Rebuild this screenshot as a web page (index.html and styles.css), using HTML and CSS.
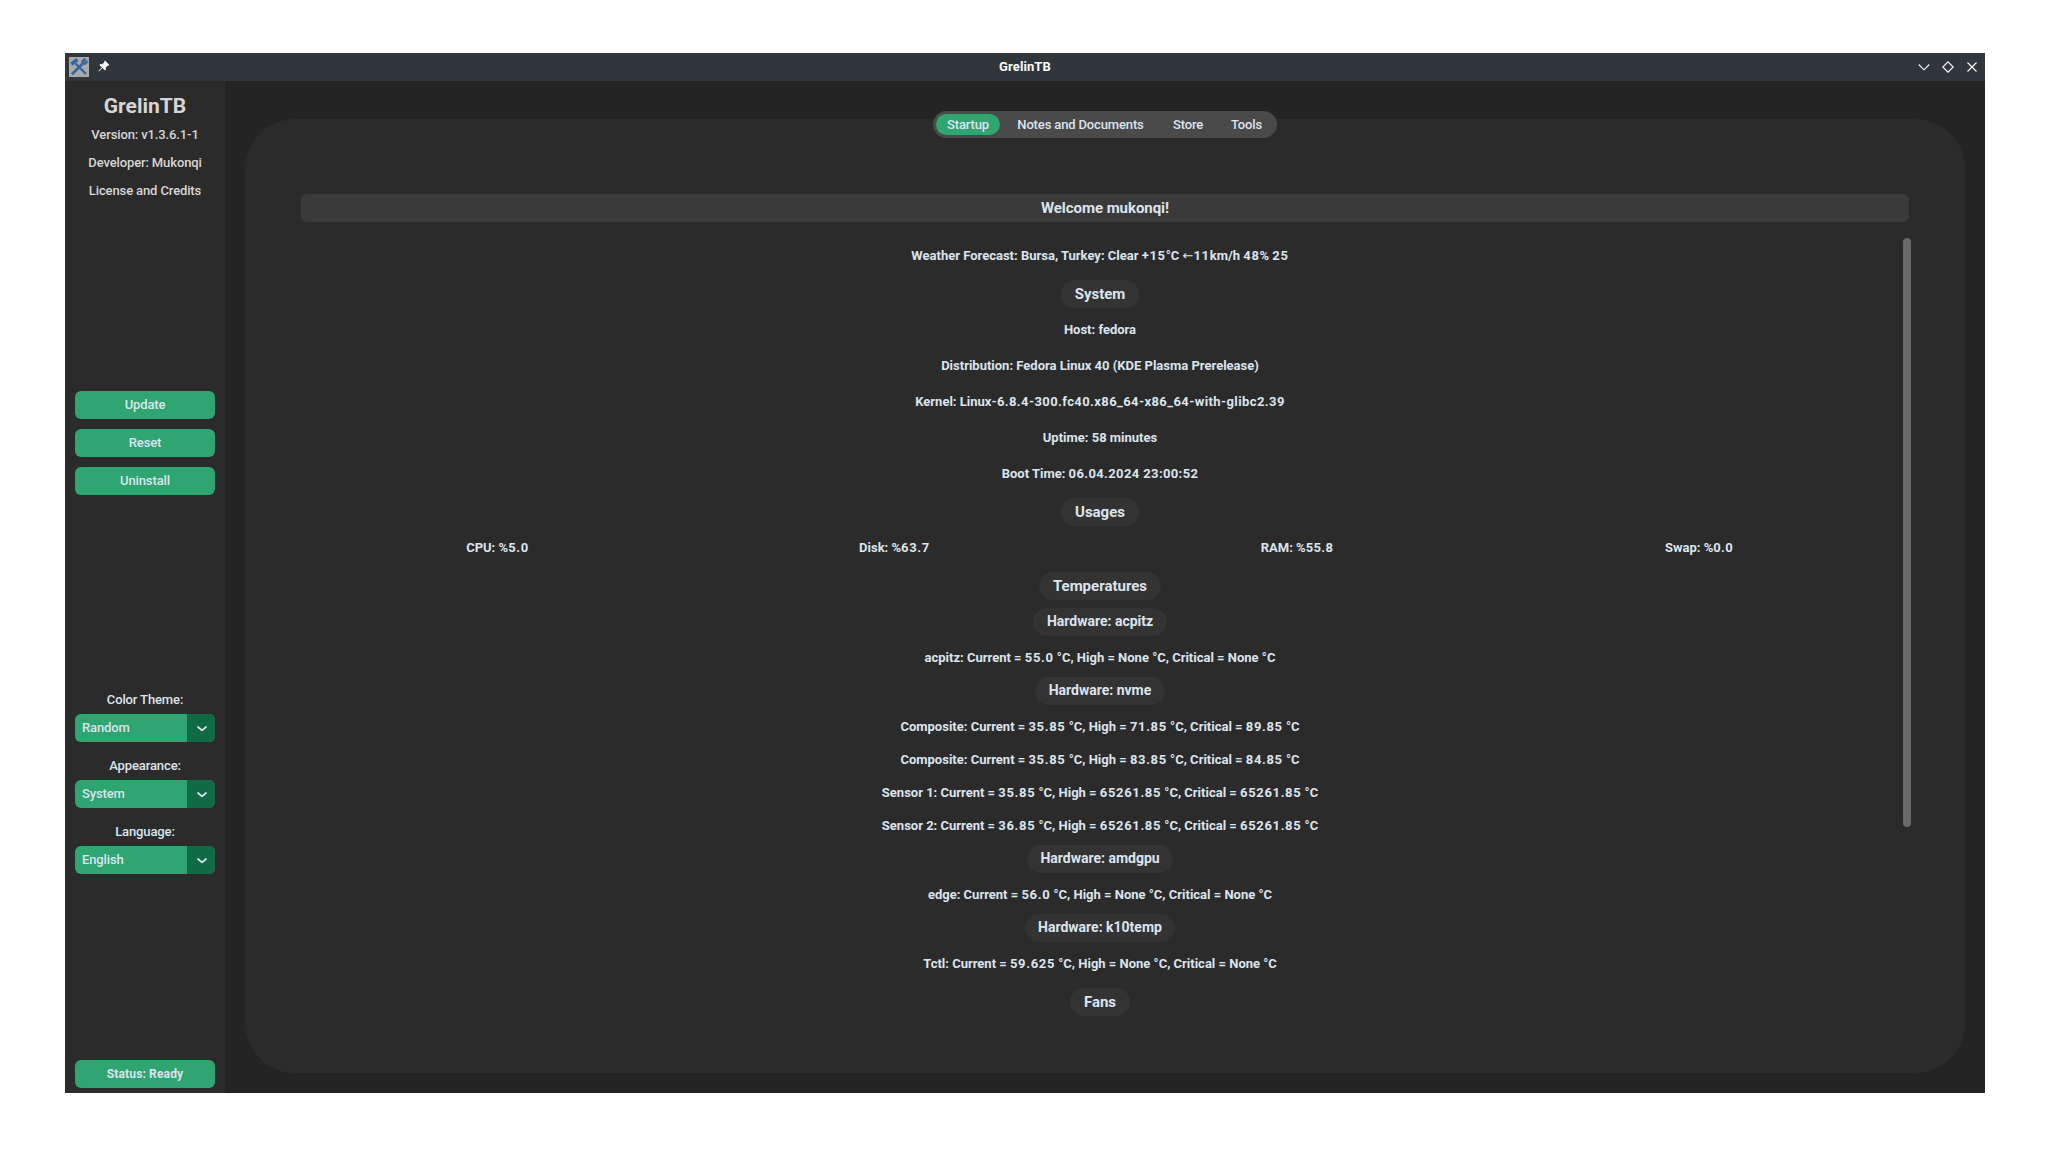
FILE: index.html
```html
<!DOCTYPE html>
<html lang="en">
<head>
<meta charset="utf-8">
<title>GrelinTB</title>
<link rel="stylesheet" href="styles.css">
</head>
<body>
<div class="window">
  <header class="titlebar">
    <div class="title-left">
      <svg class="app-icon" width="20" height="20" viewBox="0 0 20 20">
        <rect width="20" height="20" fill="#a9a9a9"/>
        <g fill="none" stroke="#3568a2">
          <path d="M6.5 6.5 17 17" stroke-width="2.4"/>
          <path d="M13.3 7 3 17.2" stroke-width="2.8"/>
          <path d="M2.3 7.2 8.4 2.6" stroke-width="3.8"/>
          <path d="M16.4 1.6 13.7 4.2V6.5H16L18.4 4" stroke-width="2.6"/>
        </g>
      </svg>
      <svg class="pin" width="12" height="12" viewBox="0 0 12 12" fill="#fcfcfc">
        <path d="M7 .6 11.4 5l-1 .8-.7-.2-2 2.200.2 1.700-1 1L4.500 8.100.9 11.600l-.5-.5L3.900 7.500 1.500 5.100l1-1 1.700.2L6.400 2.300l-.2-.7z"/>
      </svg>
    </div>
    <div class="title">GrelinTB</div>
    <div class="title-right">
      <svg width="12" height="12" viewBox="0 0 12 12"><path d="M.7 3.500 6 8.800 11.300 3.500"/></svg>
      <svg width="12" height="12" viewBox="0 0 12 12"><path d="M6 .8 11.200 6 6 11.200.8 6z"/></svg>
      <svg width="12" height="12" viewBox="0 0 12 12"><path d="M1.500 1.500 10.500 10.500M10.500 1.500 1.500 10.500"/></svg>
    </div>
  </header>
  <div class="body">
    <aside class="sidebar">
      <div class="about">
        <h1>GrelinTB</h1>
        <p>Version: v1.3.6.1-1</p>
        <p>Developer: Mukonqi</p>
        <p>License and Credits</p>
      </div>
      <div class="actions">
        <button>Update</button>
        <button>Reset</button>
        <button>Uninstall</button>
      </div>
      <div class="options">
        <label>Color Theme:</label>
        <div class="select"><span>Random</span><i><svg width="10" height="6" viewBox="0 0 10 6"><path d="M1 1 5 4.300 9 1"/></svg></i></div>
        <label>Appearance:</label>
        <div class="select"><span>System</span><i><svg width="10" height="6" viewBox="0 0 10 6"><path d="M1 1 5 4.300 9 1"/></svg></i></div>
        <label>Language:</label>
        <div class="select"><span>English</span><i><svg width="10" height="6" viewBox="0 0 10 6"><path d="M1 1 5 4.300 9 1"/></svg></i></div>
      </div>
      <div class="status">Status: Ready</div>
    </aside>
    <main class="main">
      <nav class="tabs">
        <a class="tab active">Startup</a>
        <a class="tab notes">Notes and Documents</a>
        <a class="tab store">Store</a>
        <a class="tab tools">Tools</a>
      </nav>
      <section class="panel">
        <div class="welcome">Welcome mukonqi!</div>
        <div class="scroll">
          <div class="content">
            <p>Weather Forecast: Bursa, Turkey: Clear <span class="num">+15</span>°C <span class="arrow">←</span><span class="num">11</span>km/h <span class="num">48</span>% <span class="num">25</span></p>
            <h2>System</h2>
            <p>Host: fedora</p>
            <p>Distribution: Fedora Linux 40 (KDE Plasma Prerelease)</p>
            <p>Kernel: Linux<span class="release">-6.8.4-300.fc40.x86_64-x86_64-with-glibc2.39</span></p>
            <p>Uptime: 58 minutes</p>
            <p>Boot Time: <span class="date">06.04.2024 23:00:52</span></p>
            <h2>Usages</h2>
            <div class="usages">
              <p>CPU: %<span class="num">5.0</span></p>
              <p>Disk: %<span class="num">63.7</span></p>
              <p>RAM: %<span class="date">55.8</span></p>
              <p>Swap: %<span class="date">0.0</span></p>
            </div>
            <h2>Temperatures</h2>
            <h3>Hardware: acpitz</h3>
            <p>acpitz: Current = <span class="num">55.0</span> °C, High = None °C, Critical = None °C</p>
            <h3 class="tight">Hardware: nvme</h3>
            <p>Composite: Current = <span class="num">35.85</span> °C, High = <span class="num">71.85</span> °C, Critical = <span class="num">89.85</span> °C</p>
            <p class="tight">Composite: Current = <span class="num">35.85</span> °C, High = <span class="num">83.85</span> °C, Critical = <span class="num">84.85</span> °C</p>
            <p class="tight">Sensor 1: Current = <span class="num">35.85</span> °C, High = <span class="num">65261.85</span> °C, Critical = <span class="num">65261.85</span> °C</p>
            <p class="tight">Sensor 2: Current = <span class="num">36.85</span> °C, High = <span class="num">65261.85</span> °C, Critical = <span class="num">65261.85</span> °C</p>
            <h3 class="tight">Hardware: amdgpu</h3>
            <p>edge: Current = <span class="num">56.0</span> °C, High = None °C, Critical = None °C</p>
            <h3 class="tight">Hardware: k10temp</h3>
            <p>Tctl: Current = <span class="num">59.625</span> °C, High = None °C, Critical = None °C</p>
            <h2>Fans</h2>
          </div>
          <div class="scrollbar"></div>
        </div>
      </section>
    </main>
  </div>
</div>
</body>
</html>
```
FILE: styles.css
```css
* { box-sizing: border-box; }

body {
  margin: 0;
  padding: 53px 65px 77px;
  height: 1170px;
  background: #fff;
  font-family: Roboto, "Liberation Sans", sans-serif;
  font-size: 13px;
  font-weight: 500;
  color: #dce4ee;
  overflow: hidden;
}

h1, h2, h3, p { margin: 0; }

.window {
  width: 1920px;
  height: 1040px;
  display: flex;
  flex-direction: column;
  background: #242424;
}

.titlebar {
  height: 28px;
  display: grid;
  grid-template-columns: 1fr auto 1fr;
  align-items: center;
  background: #31363b;
  color: #fcfcfc;
}
.title { font-weight: 700; line-height: 28px; letter-spacing: 0.1px; }
.title-left { display: flex; align-items: center; gap: 9px; padding-left: 4px; }
.pin { margin-top: -2px; }
.title-right { display: flex; justify-content: flex-end; gap: 12px; padding-right: 7px; }
.title-right path { fill: none; stroke: #fcfcfc; stroke-width: 1.1; }

.body { flex: 1; display: flex; }

.sidebar {
  width: 160px;
  padding: 0 10px 5px;
  display: flex;
  flex-direction: column;
  background: #2b2b2b;
  letter-spacing: -0.12px;
}
.about { padding-top: 10px; height: 310px; text-align: center; color: #d6d6d6; }
.about h1 { font-size: 21px; line-height: 30px; letter-spacing: 0; }
.about p { height: 28px; line-height: 28px; }

.actions { display: flex; flex-direction: column; gap: 10px; height: 291px; }
.actions button {
  height: 28px;
  padding: 0 0 1px;
  border: 0;
  border-radius: 6px;
  background: #2fa572;
  color: #dce4ee;
  font: inherit;
  letter-spacing: inherit;
}

.options { display: flex; flex-direction: column; }
.options label { height: 32px; padding-top: 4px; line-height: 28px; text-align: center; }
.select {
  height: 28px;
  margin-bottom: 6px;
  display: flex;
  border-radius: 6px;
  overflow: hidden;
  background: #2fa572;
  line-height: 27px;
}
.select span { flex: 1; padding-left: 7px; }
.select i { width: 28px; display: grid; place-items: center; padding: 2px 0 0 1px; background: #106a43; }
.select path { fill: none; stroke: #dce4ee; stroke-width: 1.7; stroke-linecap: round; stroke-linejoin: round; }

.status {
  margin-top: auto;
  height: 28px;
  line-height: 28px;
  border-radius: 6px;
  background: #2fa572;
  text-align: center;
  font-size: 12px;
  font-weight: 700;
  letter-spacing: 0.15px;
}

.main { flex: 1; display: flex; flex-direction: column; align-items: center; padding: 30px 20px 20px; }

.tabs {
  position: relative;
  z-index: 1;
  display: flex;
  width: 344px;
  height: 27px;
  margin-bottom: -19px;
  padding: 3px;
  border-radius: 14px;
  background: #4a4a4a;
  line-height: 21px;
  letter-spacing: -0.14px;
}
.tab { text-align: center; flex-shrink: 0; }
.active { width: 64px; border-radius: 11px; background: #2fa572; }
.notes { width: 161px; }
.store { width: 54px; }
.tools { width: 59px; padding-left: 4px; }

.panel {
  width: 1720px;
  height: 954px;
  padding: 75px 54px 0 56px;
  border-radius: 50px;
  background: #2b2b2b;
}
.welcome {
  width: 1608px;
  height: 28px;
  border-radius: 6px;
  background: #3a3a3a;
  text-align: center;
  font-size: 15px;
  font-weight: 700;
  line-height: 28px;
  letter-spacing: -0.05px;
}

.scroll { display: flex; padding-top: 16px; }
.content {
  width: 1602px;
  padding-top: 4px;
  margin-left: -2px;
  margin-right: 2px;
  display: flex;
  flex-direction: column;
  align-items: center;
  gap: 8px;
  font-weight: 700;
}
.content p { height: 28px; line-height: 27px; white-space: pre; }
.content h2, .content h3 {
  height: 28px;
  border-radius: 14px;
  background: #333;
}
.content h2 { margin-top: 2px; padding: 0 14px; font-size: 15px; line-height: 28px; }
.content h3 { padding: 0 13.5px; font-size: 14px; line-height: 27px; }
.content .tight { margin-top: -3px; }
.num { letter-spacing: 0.67px; }
.release { letter-spacing: 0.41px; }
.date { letter-spacing: 0.38px; }
.arrow { font-family: "DejaVu Sans", sans-serif; font-weight: 400; line-height: 1; }

.usages { width: 1602px; display: grid; grid-template-columns: 397px 397px 408px 396px; justify-items: center; }
.scrollbar { width: 8px; height: 589px; border-radius: 4px; background: #696969; }
```
